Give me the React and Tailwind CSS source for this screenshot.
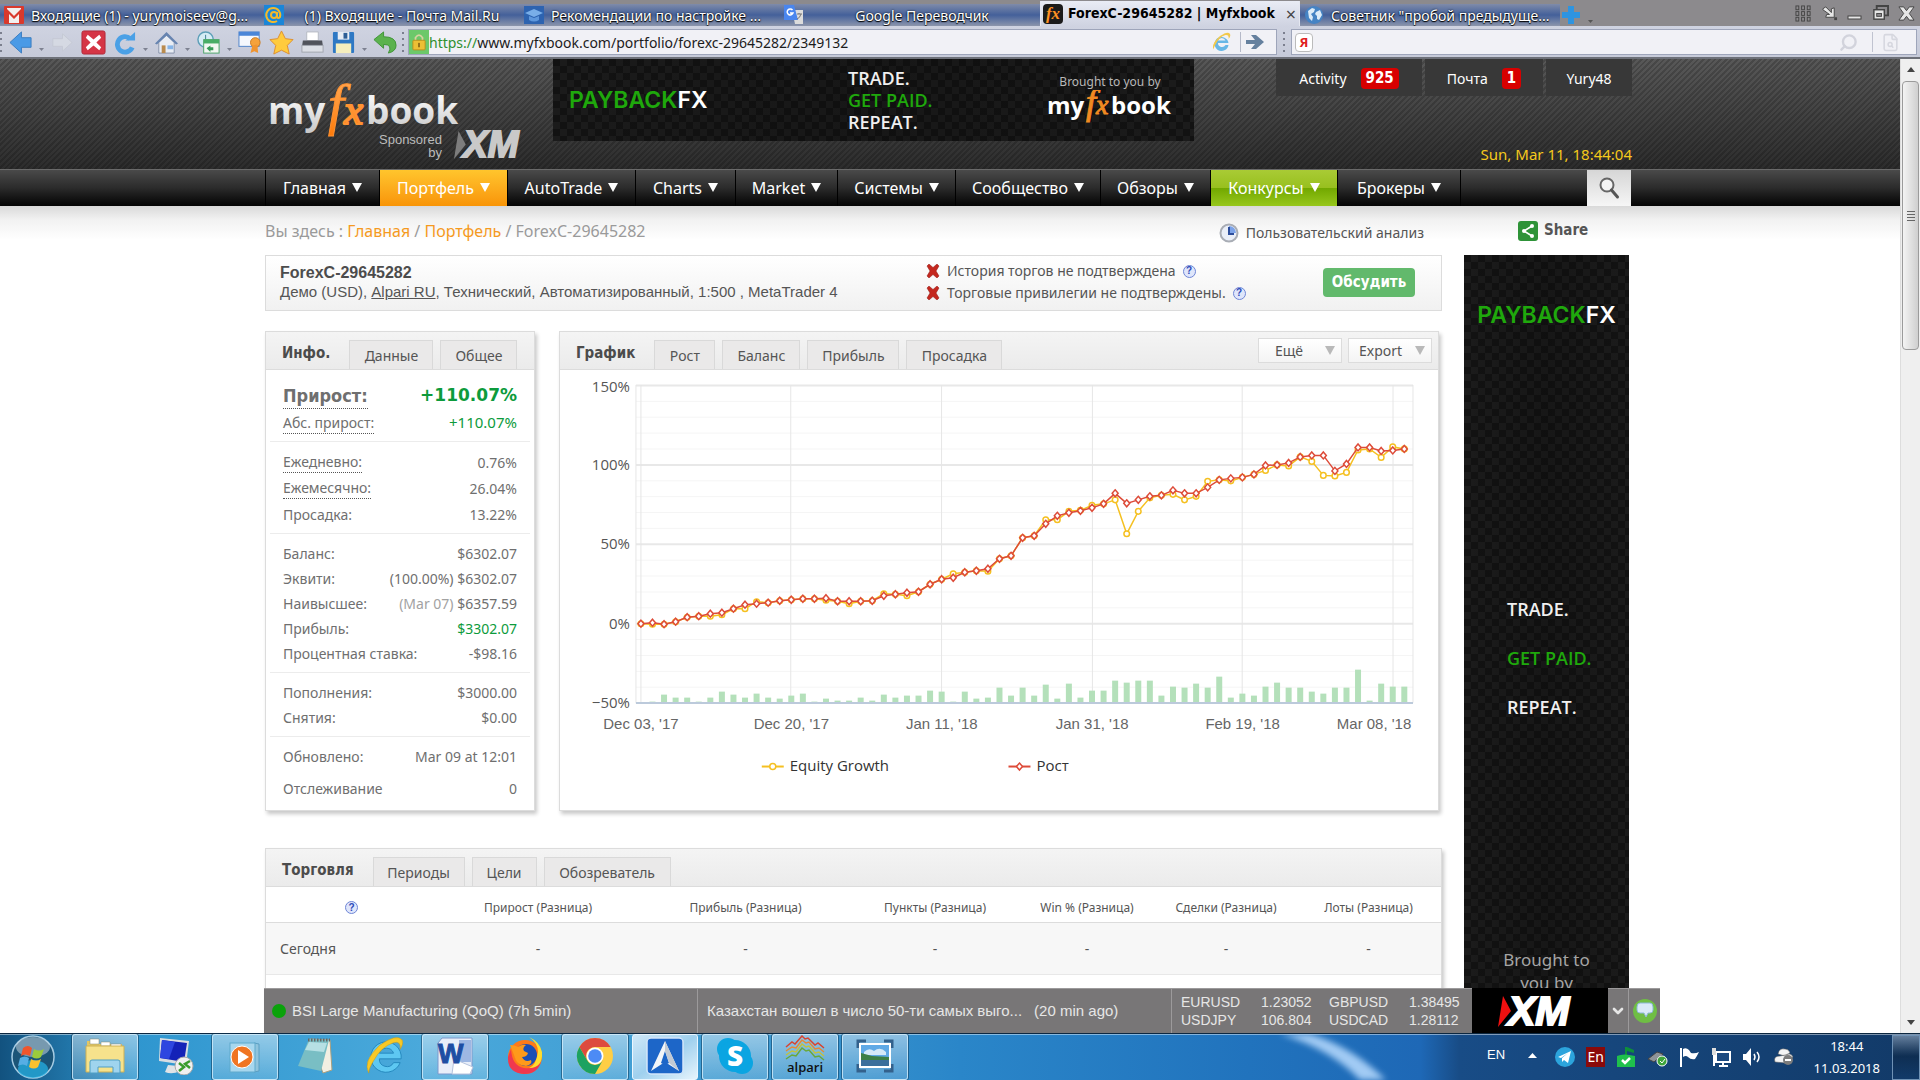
import React from "react";
import { Search, FileSearch, ChevronDown } from "lucide-react";

const carbon =
  "bg-[linear-gradient(90deg,rgba(0,0,0,0)_0%,rgba(0,0,0,0.15)_50%,rgba(0,0,0,0)_100%),conic-gradient(#1b1b1b_25%,#121212_0_50%,#1b1b1b_0_75%,#121212_0)] bg-[length:100%_100%,14px_14px]";

/* ---------- shared pieces ---------- */

function Down({ size = "h-[9px] w-[10px]", className = "" }) {
  return (
    <svg viewBox="0 0 10 9" preserveAspectRatio="none" className={"shrink-0 " + size + " " + className} aria-hidden="true">
      <path d="M0 0h10L5 9z" fill="currentColor" />
    </svg>
  );
}

function Wordmark({ large = false }) {
  return large ? (
    <svg viewBox="0 0 196 58" className="h-[58px] w-[196px]" role="img" aria-label="myfxbook">
      <defs>
        <linearGradient id="flame" x1="0" y1="0" x2="0" y2="1"><stop offset="0" stopColor="#ffb060" /><stop offset="1" stopColor="#ff7a08" /></linearGradient>
        <linearGradient id="steel" x1="0" y1="0" x2="0" y2="1"><stop offset="0.3" stopColor="#f4f4f4" /><stop offset="1" stopColor="#c4c4c4" /></linearGradient>
      </defs>
      <g fontFamily="Open Sans" fontWeight="bold" fontSize="37" fill="url(#steel)"><text x="0" y="43">my</text><text x="98" y="43">book</text></g>
      <g fontFamily="Liberation Serif" fontStyle="italic" fill="url(#flame)" stroke="#ff9232"><text x="60" y="43" fontSize="58">f</text><text x="76" y="43" fontSize="43" strokeWidth="2">x</text></g>
    </svg>
  ) : (
    <svg viewBox="0 0 126 36" className="h-9 w-[126px]" role="img" aria-label="myfxbook">
      <g fontFamily="Open Sans" fontWeight="bold" fontSize="24" fill="#fff"><text x="0" y="24">my</text><text x="64" y="24">book</text></g>
      <g fontFamily="Liberation Serif" fontStyle="italic" fill="#f08a22" stroke="#f08a22"><text x="39" y="24" fontSize="36">f</text><text x="49" y="24" fontSize="28">x</text></g>
    </svg>
  );
}

function XM({ arrow, letters, className }) {
  return (
    <svg viewBox="0 0 84 34" className={"overflow-visible " + className} role="img" aria-label="XM">
      <path d="M5 2l8 15L0 33z" fill={arrow} />
      <text x="10" y="31" fontFamily="Liberation Sans" fontWeight="900" fontStyle="italic" fontSize="41" fill={letters} stroke={letters} strokeWidth="2">XM</text>
    </svg>
  );
}

function Help() {
  return (
    <button aria-label="Справка" className="flex size-[13px] items-center justify-center rounded-full border border-[#6f86d6] bg-[#dfe6fb] font-['Liberation_Sans'] text-[10px] leading-none font-bold text-[#2c49b8]">
      ?
    </button>
  );
}

/* ---------- browser chrome ---------- */

const tabBase =
  "flex h-[22px] w-[260px] items-center bg-gradient-to-b from-[#7f8ba9] via-[#44609a] to-[#8c95ab] pl-1 text-[14px] text-white [text-shadow:0_0_2px_#000,0_1px_1px_#000]";

function GmailIcon() {
  return (
    <svg viewBox="0 0 20 18" className="h-[18px] w-5 shrink-0"><rect width="20" height="18" rx="1" fill="#d9392c" /><path d="M3 2h14v15H3z" fill="#f3f0ef" /><path d="M2 2l8 8 8-8v15h-3V8l-5 5-5-5v9H2z" fill="#d9392c" /></svg>
  );
}
function MailRuIcon() {
  return (
    <svg viewBox="0 0 20 20" className="size-5 shrink-0"><rect width="20" height="20" fill="#1a86d8" /><g fill="none" stroke="#f2b92c" strokeWidth="2"><circle cx="10" cy="10" r="3" /><path d="M13 7v5q1 2 3 0a7 7 0 1 0-3 4" /></g></svg>
  );
}
function CapIcon() {
  return (
    <svg viewBox="0 0 20 18" className="h-[18px] w-5 shrink-0"><rect width="20" height="18" fill="#2d63b0" /><path d="M1 7l9-4 9 4-9 4z" fill="#79aee8" /><path d="M5 10v4q5 3 10 0v-4l-5 2z" fill="#5e97dc" /></svg>
  );
}
function TranslateIcon() {
  return (
    <svg viewBox="0 0 20 20" className="size-5 shrink-0"><path d="M8 5h11v14h-8z" fill="#dcdcdc" /><path d="M0 0h10l4 15H0z" fill="#4a86ee" /><path d="M8.500 5A3 3 0 1 0 9 8H6" fill="none" stroke="#fff" strokeWidth="1.500" /><path d="M13 9h5M15 8v1M17 9q-1 4-4 5" stroke="#777" fill="none" /></svg>
  );
}
function FxIcon() {
  return (
    <span className="flex size-5 shrink-0 items-center justify-center rounded-sm bg-[#1b1b1b] font-['Liberation_Serif'] text-[17px] leading-none font-bold text-[#ff9122] italic [text-shadow:none]">fx</span>
  );
}
function GlobeIcon() {
  return (
    <svg viewBox="0 0 20 20" className="size-5 shrink-0"><circle cx="10" cy="10" r="9" fill="#4583c4" /><path d="M4 6l4-3 3 1-1 3-3 2 2 3-1 4-3-3zM12 7l4-2 2 5-3 5-2-1 0-3-2-2z" fill="#dcebf8" /></svg>
  );
}

function TabBar() {
  const tabs = [
    [<GmailIcon />, "Входящие (1) - yurymoiseev@g...", "text-left"],
    [<MailRuIcon />, "(1) Входящие - Почта Mail.Ru", "text-center"],
    [<CapIcon />, "Рекомендации по настройке ...", "text-left"],
    [<TranslateIcon />, "Google Переводчик", "text-center"],
  ];
  return (
    <div className="flex h-[26px] items-end bg-[#8c8a8d]">
      <div role="tablist" className="flex items-end">
        {tabs.map(([icon, name, align]) => (
          <button key={name} role="tab" className={tabBase}>
            {icon}
            <span className={"min-w-0 flex-1 truncate px-[7px] " + align}>{name}</span>
          </button>
        ))}
        <div className="flex h-[25px] w-[260px] items-center gap-[5px] border-x border-[#e4e7f0] bg-gradient-to-b from-[#e9ecf5] to-[#cfd3e1] pl-[2px]">
          <FxIcon />
          <button role="tab" aria-selected="true" className="flex-1 truncate text-left font-['DejaVu_Sans_Condensed'] text-[14px] font-bold text-black">ForexC-29645282 | Myfxbook</button>
          <button aria-label="Закрыть вкладку" className="w-4 text-[18px] leading-none text-[#444]">×</button>
        </div>
        <button role="tab" className={tabBase}>
          <GlobeIcon />
          <span className="min-w-0 flex-1 truncate px-[7px] text-left">Советник "пробой предыдуще...</span>
        </button>
      </div>
      <button aria-label="Новая вкладка" className="ml-[2px] flex h-[22px] items-center gap-2">
        <svg viewBox="0 0 18 18" className="size-[18px]"><path d="M6 0h6v6h6v6h-6v6H6v-6H0V6h6z" fill="#2e94e0" /></svg>
        <Down size="h-[3px] w-[5px]" className="mt-3 text-[#555]" />
      </button>
      <div className="ml-auto flex h-[26px] items-center gap-[9px] pr-[5px] text-[#3d3d3d]">
        <button aria-label="Вкладки"><svg viewBox="0 0 18 18" className="size-[17px]">{[1, 7, 13].map((x) => [1, 7, 13].map((y) => <rect key={x + "-" + y} x={x} y={y} width="3" height="4" fill="none" stroke="#444" />))}</svg></button>
        <button aria-label="В трей"><svg viewBox="0 0 18 18" className="size-[17px]"><path d="M2 4l3-2 6 6V4l3-1v10H5l1-3h3L2 5z" fill="#e6e6e6" stroke="#444" /><rect x="14" y="13" width="3" height="3" fill="#444" /></svg></button>
        <button aria-label="Свернуть"><svg viewBox="0 0 16 16" className="size-4"><rect x="1" y="11" width="13" height="3" fill="#e6e6e6" stroke="#444" /></svg></button>
        <button aria-label="Восстановить"><svg viewBox="0 0 18 18" className="size-[17px]"><path d="M5 5V1h12v10h-4" fill="none" stroke="#444" strokeWidth="2" /><rect x="2" y="5" width="11" height="10" fill="#e6e6e6" stroke="#444" strokeWidth="1.500" /><rect x="5" y="9" width="5" height="3" fill="#8c8a8d" stroke="#444" /></svg></button>
        <button aria-label="Закрыть"><svg viewBox="0 0 18 18" className="size-[17px]"><path d="M1 2h5l3 4 3-4h5l-5 7 5 7h-5l-3-4-3 4H1l5-7z" fill="#e6e6e6" stroke="#444" /></svg></button>
      </div>
    </div>
  );
}

function Grip() {
  return <span className="h-5 w-[2px] shrink-0 bg-[repeating-linear-gradient(180deg,#7b7f8e_0_2px,transparent_2px_6px)]" />;
}

function Tool({ label, drop, children }) {
  return (
    <button aria-label={label} className="flex items-end">
      <svg viewBox="-1 -1 26 26" className="size-[25px]">{children}</svg>
      {drop && <Down size="h-[3px] w-[5px]" className="mb-1 ml-[6px] text-[#7d8191]" />}
    </button>
  );
}

function Toolbar() {
  return (
    <div className="flex h-[33px] items-center border-b-2 border-[#6d7078] bg-gradient-to-b from-[#cfd3e1] to-[#c6cad9] pt-px">
      <Grip />
      <div className="flex shrink-0 items-center gap-[6px] pr-[4px] pl-[6px]">
        <Tool label="Назад" drop><path d="M1 12L13 1v6h10v10H13v6z" fill="#4a9ae6" stroke="#3a7cc0" /></Tool>
        <Tool label="Вперёд"><path d="M22 12L12 3v5H2v8h10v5z" fill="#d5d9e3" stroke="#c5c9d4" /></Tool>
        <Tool label="Стоп"><rect x="0" y="0" width="24" height="24" rx="2" fill="#d53546" stroke="#b12838" /><path d="M6 4l6 5 6-5 2 3-5 5 5 5-2 3-6-5-6 5-2-3 5-5-5-5z" fill="#fff" /></Tool>
        <Tool label="Обновить" drop><path d="M18 8A8 8 0 1 0 20 17" fill="none" stroke="#4aa0e6" strokeWidth="5" /><path d="M13 10h10V1z" fill="#4aa0e6" /></Tool>
        <Tool label="Домой" drop><path d="M4 12v11h16V12l-8-8z" fill="#e9edf4" stroke="#8793ab" /><path d="M0 13L12 1l12 12-2 1L12 5 2 14z" fill="#6784b0" /><rect x="7" y="15" width="4" height="8" fill="#b98b4e" /><rect x="13" y="15" width="6" height="4" fill="#86b5e8" /></Tool>
        <Tool label="Журнал" drop><circle cx="9" cy="9" r="8" fill="#d5ecf5" stroke="#5e9fb8" strokeWidth="1.500" /><path d="M9 4v5l4 3" stroke="#3d7d94" fill="none" /><rect x="7" y="9" width="16" height="14" fill="#f2f7f2" stroke="#4ba368" /><rect x="7" y="9" width="16" height="4" fill="#48ad66" /><path d="M10 18l4-3v2h3v3h-3v2z" fill="#369c57" /></Tool>
        <Tool label="Сертификат"><rect x="0" y="1" width="21" height="15" fill="#f5f8fd" stroke="#4f83c9" /><rect x="0" y="1" width="21" height="4" fill="#4a86d8" /><circle cx="17" cy="12" r="5" fill="#f5a23c" stroke="#c97a20" /><path d="M14 15l-2 8 4-2 4 2-1-9z" fill="#ef9430" /></Tool>
        <Tool label="Избранное"><path d="M12 0l4 8 8 1-6 6 2 9-8-4-8 4 2-9-6-6 8-1z" fill="#ffcb3d" stroke="#dd8f30" /></Tool>
        <Tool label="Печать"><path d="M6 1h12v9H6z" fill="#fff" stroke="#b5b9c2" /><path d="M2 10h20l1 7H1z" fill="#50535b" /><rect x="1" y="15" width="22" height="7" fill="#dcdfe6" stroke="#a0a4ae" /></Tool>
        <Tool label="Сохранить" drop><rect x="1" y="1" width="22" height="22" rx="1" fill="#2e78c4" /><rect x="6" y="1" width="12" height="8" fill="#e8edf4" /><rect x="12" y="2" width="4" height="6" fill="#2e5f96" /><rect x="4" y="13" width="16" height="10" fill="#f5eebd" /></Tool>
        <Tool label="Отменить"><path d="M0 9l10-8v5q13 0 13 9 0 6-8 8 5-9-5-9v4z" fill="#5bb24e" stroke="#3f9437" /></Tool>
      </div>
      <Grip />
      <div className="ml-1 flex h-[26px] flex-1 items-center border border-[#9ea5ba] bg-[#f1f1f6]">
        <span className="flex h-full w-[20px] shrink-0 items-center justify-center bg-[#6cc86a]">
          <svg viewBox="0 0 16 20" className="h-[18px] w-[14px]"><path d="M4 9V5q4-6 8 0v4" fill="none" stroke="#d8d2a0" strokeWidth="2" /><rect x="1" y="8" width="14" height="11" rx="1" fill="#edbf35" stroke="#b88b18" /><rect x="7" y="11" width="2" height="5" fill="#8c6914" /></svg>
        </span>
        <span aria-label="Адрес" className="flex-1 truncate text-[14px] text-[#1c1c1c]"><span className="text-[#2f8f2f]">https://</span>www.myfxbook.com/portfolio/forexc-29645282/2349132</span>
        <svg viewBox="0 0 40 40" className="size-5"><path d="M33 22H12a8 8 0 0 0 15 4h6a14 14 0 1 1 0-4zM12 17h15a8 8 0 0 0-15 0z" fill="#68b7e6" /><path d="M3 35Q-2 24 16 8 32-3 36 4q2 5-3 10 2-9-6-8Q14 10 7 25q-4 8-4 10z" fill="#f2c94c" /></svg>
        <span className="ml-2 h-5 w-px bg-[#b5b9c8]" />
        <button aria-label="Перейти" className="mr-[11px] ml-1"><svg viewBox="0 0 20 20" className="size-5"><path d="M1 8h9L6 3h5l8 7-8 7H6l4-5H1z" fill="#65809e" /></svg></button>
      </div>
      <span className="mx-[6px] flex"><Grip /></span>
      <label className="mr-[3px] flex h-[26px] w-[626px] items-center border border-[#9ea5ba] bg-[#f1f1f6] pl-[3px]">
        <span className="flex h-[19px] w-[18px] shrink-0 items-center justify-center rounded-sm border border-[#bbb] bg-white text-[13px] leading-none font-bold text-[#e02020]">Я</span>
        <input aria-label="Поиск в Яндексе" className="min-w-0 flex-1 bg-transparent px-2 text-[14px] outline-none" />
        <Search className="size-[19px] -scale-x-100 rotate-0 text-[#d2d3dc]" strokeWidth={3} />
        <span className="mr-[8px] ml-[14px] h-5 w-px bg-[#c0c3d0]" />
        <FileSearch className="mr-4 size-[19px] text-[#d6d7df]" />
      </label>
    </div>
  );
}

/* ---------- site header ---------- */

const menu = [
  ["Главная", "w-[114px] bg-gradient-to-b from-[#4a4a4a] via-[#2b2b2b] to-[#050505]"],
  ["Портфель", "w-[128px] bg-gradient-to-b from-[#ffc52c] to-[#f89406]"],
  ["AutoTrade", "w-[128px] bg-gradient-to-b from-[#4a4a4a] via-[#2b2b2b] to-[#050505]"],
  ["Charts", "w-[100px] bg-gradient-to-b from-[#4a4a4a] via-[#2b2b2b] to-[#050505]"],
  ["Market", "w-[102px] bg-gradient-to-b from-[#4a4a4a] via-[#2b2b2b] to-[#050505]"],
  ["Системы", "w-[118px] bg-gradient-to-b from-[#4a4a4a] via-[#2b2b2b] to-[#050505]"],
  ["Сообщество", "w-[145px] bg-gradient-to-b from-[#4a4a4a] via-[#2b2b2b] to-[#050505]"],
  ["Обзоры", "w-[110px] bg-gradient-to-b from-[#4a4a4a] via-[#2b2b2b] to-[#050505]"],
  ["Конкурсы", "w-[127px] bg-[linear-gradient(180deg,#a9cb35_0%,#98c01f_49%,#72a800_51%,#97c71c_100%)]"],
  ["Брокеры", "w-[123px] bg-gradient-to-b from-[#4a4a4a] via-[#2b2b2b] to-[#050505]"],
];

function Header() {
  const badge = "rounded-sm bg-[#d80000] px-[5px] font-['DejaVu_Sans_Condensed'] text-[15px] leading-[21px]";
  return (
    <header>
      <div className="bg-[repeating-linear-gradient(135deg,rgba(0,0,0,0.18)_0_2px,transparent_2px_4px),linear-gradient(180deg,#585858,#2c2c2c)]">
        <div className="mx-auto flex h-[110px] w-full max-w-[1370px]">
          <a href="#" aria-label="Myfxbook" className="flex w-[288px] shrink-0 flex-col pt-[22px] pl-[3px]">
            <Wordmark large />
            <span className="-mt-[10px] ml-[111px] flex gap-3 font-['Liberation_Sans'] text-[13px] leading-[13px] text-[#bcbcbc]">
              <span className="pt-[4px] text-right">Sponsored<br />by</span>
              <XM arrow="#7d7d7d" letters="#c9c9c9" className="h-[31px] w-[76px]" />
            </span>
          </a>
          <a href="#" className={"flex h-[82px] w-[641px] shrink-0 items-center justify-between pr-[21px] pl-4 " + carbon}>
            <span className="w-[260px] font-['Inter'] text-[23px] font-semibold text-white"><span className="text-[#1fa80c]">PAYBACK</span>FX</span>
            <span className="flex-1 pl-[19px] font-['Open_Sans'] text-[18px] leading-[22px] font-semibold text-[#f0f0f0]">TRADE.<br /><span className="text-[#1fa80c]">GET PAID.</span><br />REPEAT.</span>
            <span className="flex flex-col items-center text-[12px] leading-4 text-[#b8b8b8]"><span>Brought to you by</span><Wordmark /></span>
          </a>
          <div className="ml-auto flex flex-col items-end justify-between pr-[3px]">
            <nav aria-label="Аккаунт" className="flex h-[37px] gap-[3px] text-[14px] text-white">
              <a href="#" className="flex w-[146px] items-center justify-center gap-[14px] bg-[#383838] pt-px">Activity <b className={badge}>925</b></a>
              <a href="#" className="flex w-[118px] items-center justify-center gap-[14px] bg-[#383838] pt-px">Почта <b className={badge}>1</b></a>
              <a href="#" className="flex w-[86px] items-center justify-center bg-[#383838] pt-px">Yury48</a>
            </nav>
            <time className="pb-1 text-[15px] leading-[22px] text-[#f5c91c]">Sun, Mar 11, 18:44:04</time>
          </div>
        </div>
      </div>
      <div className="border-t border-[#6a6a6a] bg-gradient-to-b from-[#4a4a4a] via-[#2b2b2b] to-[#050505]">
        <nav aria-label="Меню" className="mx-auto flex h-9 w-full max-w-[1370px] border-l border-black">
          {menu.map(([name, cls]) => (
            <a key={name} href="#" className={"flex items-center justify-center gap-[6px] border-r border-black pb-px text-[16px] text-white " + cls}>
              {name}<Down />
            </a>
          ))}
          <button aria-label="Поиск" className="mr-1 ml-auto flex w-11 items-center justify-center bg-gradient-to-b from-[#d6d6d6] to-[#f6f6f6]">
            <svg viewBox="0 0 24 24" className="size-[24px]"><circle cx="10" cy="9" r="6.500" fill="#f4f4f4" stroke="#666" strokeWidth="2" /><path d="M14.500 14l6 7" stroke="#555" strokeWidth="3" strokeLinecap="round" /></svg>
          </button>
        </nav>
      </div>
    </header>
  );
}

/* ---------- panels ---------- */

function PanelTabs({ title, tabs, children }) {
  return (
    <div className="flex h-[38px] items-end border-b border-[#dcdcdc] bg-gradient-to-b from-[#f4f4f4] to-[#ebebeb]">
      <h2 className="px-4 pr-[19px] pb-[4px] font-['DejaVu_Sans_Condensed'] text-[15px] leading-[24px] font-bold text-[#4c4c4c]">{title}</h2>
      {tabs.map(([name, w]) => (
        <button key={name} className={"mr-[7px] flex h-[29px] shrink-0 items-center justify-center border border-b-0 border-[#d9d9d9] bg-[#eae9e9] text-[14px] text-[#555] " + w}>{name}</button>
      ))}
      {children}
    </div>
  );
}

function Row({ label, value, dotted, cls = "h-[25px]", valueCls = "text-[#6f6f6f]" }) {
  return (
    <div className={"flex items-center justify-between px-[9px] " + cls}>
      <dt className={dotted ? "border-b border-dotted border-[#555]" : ""}>{label}</dt>
      <dd className={valueCls}>{value}</dd>
    </div>
  );
}

function InfoPanel() {
  const group = "mx-1 border-b border-[#ececec] px-[4px] pt-[7px] pb-[6px]";
  return (
    <section className="w-[270px] shrink-0 border border-[#dcdcdc] bg-white shadow-[2px_3px_4px_rgba(0,0,0,0.22)]">
      <PanelTabs title="Инфо." tabs={[["Данные", "w-[84px]"], ["Общее", "w-[77px]"]]} />
      <dl className="text-[14px] text-[#6f6f6f]">
        <div className="mx-1 border-b border-[#ececec] px-[4px] pt-[12px] pb-[5px]">
          <Row label="Прирост:" value="+110.07%" dotted cls="h-[27px] font-bold text-[18px] leading-[25px] font-['DejaVu_Sans_Condensed']" valueCls="font-['DejaVu_Sans'] text-[17px] text-[#0d9b3c]" />
          <Row label="Абс. прирост:" value="+110.07%" dotted cls="h-[27px]" valueCls="text-[#0d9b3c] text-[15px]" />
        </div>
        <div className={group}>
          <Row label="Ежедневно:" value="0.76%" dotted cls="h-[26px]" />
          <Row label="Ежемесячно:" value="26.04%" dotted cls="h-[26px]" />
          <Row label="Просадка:" value="13.22%" cls="h-[26px]" />
        </div>
        <div className={group}>
          <Row label="Баланс:" value="$6302.07" />
          <Row label="Эквити:" value="(100.00%) $6302.07" />
          <Row label="Наивысшее:" value={<><span className="text-[#a2a2a2]">(Mar 07)</span> $6357.59</>} />
          <Row label="Прибыль:" value="$3302.07" valueCls="text-[#0d9b3c]" />
          <Row label="Процентная ставка:" value="-$98.16" />
        </div>
        <div className={group}>
          <Row label="Пополнения:" value="$3000.00" />
          <Row label="Снятия:" value="$0.00" />
        </div>
        <div className="px-2 pt-[7px] pb-2">
          <Row label="Обновлено:" value="Mar 09 at 12:01" />
          <Row label="Отслеживание" value="0" cls="mt-[7px] h-[25px]" />
        </div>
      </dl>
    </section>
  );
}

/* Vertical positions inside the chart drawing, one per trading day. */
const growth = [624, 623, 624.5, 622, 617.5, 616.5, 614, 613, 609, 605, 604, 603, 601, 600, 599, 599, 598.5, 601.5, 601.5, 601.5, 601, 596, 594.5, 593, 592, 584.5, 579.5, 578, 572.5, 571, 569, 559, 556, 538, 536, 524, 516, 513, 511, 508, 504, 493.5, 503.5, 500, 496.5, 495.5, 490.5, 493.5, 493.5, 487.5, 480, 478.5, 477.5, 474.5, 465.5, 465, 463, 457, 455.5, 455.5, 471, 464, 447.5, 447.5, 451, 450.5, 449];
const equityDiff = { 1: 624.5, 6: 616.5, 7: 615, 9: 609, 10: 602, 16: 600.5, 18: 604, 21: 594, 23: 596, 27: 574, 30: 571.5, 35: 520, 36: 520, 37: 511.5, 38: 510.5, 39: 505.5, 41: 500, 42: 534, 43: 511.5, 44: 498, 46: 494.5, 47: 500, 48: 496.5, 49: 481.5, 51: 481, 54: 470.5, 56: 466, 58: 461.5, 59: 475.5, 60: 476, 61: 472.5, 62: 450, 63: 449, 64: 457.5, 65: 447 };
const equity = growth.map((v, i) => equityDiff[i] ?? v);
const volume = [0, 1, 8, 5, 5, 1, 5, 11, 8, 5, 9, 5, 4, 7, 9, 1, 4, 2, 2, 5, 2, 8, 5, 7, 7, 12, 11, 1, 11, 4, 5, 15, 7, 15, 7, 18, 4, 19, 5, 12, 12, 22, 20, 22, 22, 7, 16, 15, 19, 15, 26, 5, 9, 7, 16, 20, 15, 15, 11, 9, 15, 15, 33, 2, 19, 16, 16];
const px = (i) => 81 + i * 11.58;
const py = (v) => v - 370;

function Chart() {
  const line = (a) => a.map((v, i) => px(i) + "," + py(v)).join(" ");
  return (
    <svg viewBox="0 0 879 441" className="block w-full" role="img" aria-label="График роста счёта">
      {Array.from({ length: 20 }, (_, i) => <path key={i} d={`M76 ${15.5 + i * 15.9}H854`} stroke={i % 5 ? "#f5f5f5" : "#e8e8e8"} strokeWidth={i % 5 ? 1 : 2} />)}
      {[81, 231, 382, 533, 683, 834, 854, 76].map((x) => <path key={x} d={`M${x} 15V333`} stroke="#e6e6e6" />)}
      {volume.map((h, i) => <rect key={i} x={px(i) - 3} y={333 - h} width="6" height={h} fill="#b4e0ba" />)}
      <path d="M76 333.500H854" stroke="#bccadb" strokeWidth="2" />
      <polyline points={line(equity)} fill="none" stroke="#f5c021" strokeWidth="1.500" />
      {equity.map((v, i) => <circle key={i} cx={px(i)} cy={py(v)} r="2.800" fill="#fff" stroke="#f5c021" strokeWidth="1.500" />)}
      <polyline points={line(growth)} fill="none" stroke="#dd4b39" strokeWidth="1.500" />
      {growth.map((v, i) => <path key={i} d={`M${px(i)} ${py(v) - 3.5}l3 3.5-3 3.500-3-3.500z`} fill="#fff" stroke="#dd4b39" strokeWidth="1.500" />)}
      <g fontFamily="Open Sans" fontSize="15" fill="#555" textAnchor="end">
        <text x="70" y="22">150%</text><text x="70" y="100">100%</text><text x="70" y="179">50%</text><text x="70" y="259">0%</text><text x="70" y="338">−50%</text>
      </g>
      <g fontFamily="Liberation Sans" fontSize="15" fill="#666" textAnchor="middle">
        {["Dec 03, '17", "Dec 20, '17", "Jan 11, '18", "Jan 31, '18", "Feb 19, '18"].map((t, i) => <text key={t} x={81 + i * 150.600} y="359">{t}</text>)}
        <text x="815" y="359">Mar 08, '18</text>
      </g>
      <g fontFamily="Open Sans" fontSize="15" fill="#333">
        <path d="M202 397h22" stroke="#f5c021" strokeWidth="2" /><circle cx="213" cy="397" r="3" fill="#fff" stroke="#f5c021" strokeWidth="1.500" /><text x="230" y="401">Equity Growth</text>
        <path d="M449 397h22" stroke="#dd4b39" strokeWidth="2" /><path d="M460 393.500l3 3.500-3 3.500-3-3.500z" fill="#fff" stroke="#dd4b39" strokeWidth="1.500" /><text x="477" y="401">Рост</text>
      </g>
    </svg>
  );
}

function ChartPanel() {
  const drop = "mb-[6px] flex h-[25px] items-center justify-between border border-[#dcdcdc] bg-gradient-to-b from-white to-[#f4f4f4] text-[14px] text-[#555]";
  return (
    <section className="min-w-0 flex-1 border border-[#dcdcdc] bg-white shadow-[2px_3px_4px_rgba(0,0,0,0.22)]">
      <PanelTabs title="График" tabs={[["Рост", "w-[61px]"], ["Баланс", "w-[78px]"], ["Прибыль", "w-[92px]"], ["Просадка", "w-[96px]"]]}>
        <button className={drop + " ml-auto w-[84px] pr-[6px] pl-4"}>Ещё<Down className="text-[#b9b9b9]" /></button>
        <button className={drop + " mr-[6px] ml-[6px] w-[84px] pr-[6px] pl-[10px]"}>Export<Down className="text-[#b9b9b9]" /></button>
      </PanelTabs>
      <Chart />
    </section>
  );
}

function Cross() {
  return <svg viewBox="0 0 14 14" className="h-[14px] w-[14px] shrink-0"><path d="M3 0l4 3.500L11 0l2 2-3 5 3 5-2 2-4-3.500L3 14l-2-2 3-5-3-5z" fill="#c4281f" stroke="#8f1712" strokeWidth="0.500" /></svg>;
}

function Main() {
  const heads = ["Прирост", "Прибыль", "Пункты", "Win %", "Сделки", "Лоты"];
  return (
    <main className="min-w-0 flex-1">
      <div className="flex h-[49px] items-center">
        <nav aria-label="Путь" className="text-[16px] text-[#9a9a9a]">Вы здесь : <a href="#" className="text-[#f59a1f]">Главная</a> / <a href="#" className="text-[#f59a1f]">Портфель</a> / ForexC-29645282</nav>
        <a href="#" className="mr-[18px] ml-auto flex items-center gap-[7px] pt-1 text-[14px] text-[#555]">
          <svg viewBox="0 0 20 20" className="size-5"><circle cx="10" cy="10" r="8.500" fill="#e9eef8" stroke="#a9adb5" strokeWidth="2" /><path d="M10 3a7 7 0 0 1 7 7h-7z" fill="#7ba2e8" /><path d="M10 4v7h5" stroke="#2c4d9c" strokeWidth="2" fill="none" /></svg>
          Пользовательский анализ
        </a>
      </div>
      <section className="flex h-[56px] items-center border border-[#dcdcdc] bg-gradient-to-b from-white to-[#f1f1f1] pb-[2px] pl-[14px] font-['Liberation_Sans'] text-[15px] leading-[19px] text-[#555]">
        <div className="w-[646px] shrink-0 whitespace-nowrap">
          <h1 className="text-[16px] font-bold text-[#4c4c4c]">ForexC-29645282</h1>
          <p>Демо (USD), <a href="#" className="underline">Alpari RU</a>, Технический, Автоматизированный, 1:500 , MetaTrader 4</p>
        </div>
        <ul className="font-['Noto_Sans'] text-[14px] leading-[22px]">
          <li className="flex items-center gap-[7px]"><Cross />История торгов не подтверждена<Help /></li>
          <li className="flex items-center gap-[7px]"><Cross />Торговые привилегии не подтверждены.<Help /></li>
        </ul>
        <button className="mr-[26px] ml-auto h-[29px] w-[92px] rounded bg-[#62b96c] font-['DejaVu_Sans_Condensed'] text-[15px] font-bold text-white">Обсудить</button>
      </section>
      <div className="mt-5 mr-[3px] flex gap-6">
        <InfoPanel />
        <ChartPanel />
      </div>
      <section className="mt-[37px] border border-[#dcdcdc] bg-white shadow-[2px_3px_4px_rgba(0,0,0,0.22)]">
        <PanelTabs title="Торговля" tabs={[["Периоды", "w-[92px]"], ["Цели", "w-[65px]"], ["Обозреватель", "w-[127px]"]]} />
        <table className="w-full table-fixed text-[14px] text-[#555]">
          <colgroup><col className="w-[171px]" /><col className="w-[202px]" /><col className="w-[213px]" /><col className="w-[166px]" /><col className="w-[138px]" /><col className="w-[140px]" /><col /></colgroup>
          <thead>
            <tr className="h-[35px] border-b border-[#dcdcdc] text-[12px]">
              <th><span className="flex justify-center pt-[6px]"><Help /></span></th>
              {heads.map((h) => <th key={h} className="pt-[6px] font-normal">{h} (Разница)</th>)}
            </tr>
          </thead>
          <tbody>
            <tr className="h-[52px] border-b border-[#e8e8e8] bg-[#f7f7f7]">
              <th className="pl-[14px] text-left font-normal">Сегодня</th>
              {heads.map((h) => <td key={h} className="text-center">-</td>)}
            </tr>
            <tr className="h-[53px]"><td colSpan={7} /></tr>
          </tbody>
        </table>
      </section>
    </main>
  );
}

function Sidebar() {
  return (
    <aside className="w-[165px] shrink-0">
      <button className="flex h-[49px] items-center gap-[6px] pl-[54px] font-['DejaVu_Sans_Condensed'] text-[15px] font-bold text-[#555]">
        <svg viewBox="0 0 20 20" className="size-5"><rect width="20" height="20" rx="3" fill="#2e9338" /><path d="M14 5L6 10l8 5" fill="none" stroke="#fff" strokeWidth="1.500" /><g fill="#fff"><circle cx="14" cy="5" r="2" /><circle cx="6" cy="10" r="2" /><circle cx="14" cy="15" r="2" /></g></svg>
        Share
      </button>
      <a href="#" className={"flex h-[820px] flex-col text-white " + carbon}>
        <span className="pt-[44px] text-center font-['Inter'] text-[23px] leading-8 font-semibold"><span className="text-[#1fa80c]">PAYBACK</span>FX</span>
        <span className="mt-[254px] pl-[43px] font-['Open_Sans'] text-[18px] leading-[49px] font-semibold text-[#f0f0f0]">TRADE.<br /><span className="text-[#1fa80c]">GET PAID.</span><br />REPEAT.</span>
        <span className="mt-[216px] px-8 text-center text-[17px] leading-[23px] text-[#a5a5a5]">Brought to you by</span>
      </a>
    </aside>
  );
}

function Ticker() {
  return (
    <footer className="absolute inset-x-0 bottom-0">
      <div className="mx-auto flex h-[45px] w-full max-w-[1372px] font-['Liberation_Sans'] text-[15px] whitespace-nowrap text-[#e6e6e6]">
        <div className="flex w-[1396px] shrink-0">
          <a href="#" className="flex w-[434px] items-center gap-[6px] border-t border-r border-[#9c9a9b] bg-[#787677] pl-2"><span className="size-[14px] rounded-full bg-[#0aa20a]" />BSI Large Manufacturing (QoQ) (7h 5min)</a>
          <a href="#" className="flex w-[474px] items-center gap-[12px] border-t border-r border-[#9c9a9b] bg-[#787677] pl-[9px]"><span>Казахстан вошел в число 50-ти самых выго...</span><span>(20 min ago)</span></a>
          <dl className="grid w-[300px] grid-cols-[80px_68px_80px_1fr] content-center border-t border-[#9c9a9b] bg-[#787677] pl-[9px] text-[14px] leading-[18px]">
            <dt>EURUSD</dt><dd>1.23052</dd><dt>GBPUSD</dt><dd>1.38495</dd><dt>USDJPY</dt><dd>106.804</dd><dt>USDCAD</dt><dd>1.28112</dd>
          </dl>
          <a href="#" aria-label="XM" className="flex w-[136px] items-center justify-center bg-black"><XM arrow="#f01010" letters="#ffffff" className="h-[34px] w-[84px]" /></a>
          <button aria-label="Свернуть ленту" className="flex w-[20px] items-center justify-center border-t border-[#9c9a9b] bg-[#787677]"><ChevronDown className="size-[16px]" strokeWidth={4} /></button>
          <button aria-label="Чат" className="flex w-[32px] items-center justify-center border-t border-l border-[#9c9a9b] bg-[#787677]">
            <svg viewBox="0 0 24 24" className="size-6"><circle cx="12" cy="12" r="12" fill="#6fbe44" /><path d="M7 4h10q3 0 3 4v3q0 3-3 3h-2l-2 4-2-4H7q-3 0-3-3V8q0-4 3-4z" fill="#d9eaf7" stroke="#8eb8d8" /></svg>
          </button>
        </div>
      </div>
    </footer>
  );
}

function Scrollbar() {
  return (
    <div aria-hidden="true" className="flex w-5 shrink-0 flex-col items-center border-l border-[#ddd] bg-[#efefef]">
      <Down size="h-[5px] w-[8px]" className="mt-2 mb-[9px] rotate-180 text-[#444]" />
      <span className="flex h-[269px] w-[17px] flex-col items-center justify-center gap-[2px] rounded-sm border border-[#9b9b9b] bg-gradient-to-r from-[#f4f4f4] to-[#cfcfcf]">
        <i className="h-px w-2 bg-[#666]" /><i className="h-px w-2 bg-[#666]" /><i className="h-px w-2 bg-[#666]" /><i className="h-px w-2 bg-[#666]" />
      </span>
      <Down size="h-[5px] w-[8px]" className="mt-auto mb-2 text-[#444]" />
    </div>
  );
}

/* ---------- taskbar ---------- */

function AppIcon({ name }) {
  const s = "size-[38px]";
  switch (name) {
    case "Проводник":
      return <svg viewBox="0 0 40 38" className="h-[38px] w-10"><path d="M2 4h8l2 3h25v27H2z" fill="#e3c765" /><path d="M5 2h9v5H5zM16 5h9v4h-9zM26 7h10v4H26z" fill="#fff" stroke="#8a8a6a" strokeWidth="0.500" /><path d="M1 9h38v26H1z" fill="#f6e28c" stroke="#cdb055" /><path d="M5 36V25q0-2 2-2h26q2 0 2 2v11h-7v-6H13v6z" fill="#9fd4ee" stroke="#4f9fc6" /></svg>;
    case "Удалённый рабочий стол":
      return <svg viewBox="0 0 38 38" className={s}><path d="M4 1l29 3-3 24-27-4z" fill="#d8dde2" /><path d="M6 3l25 3-3 19-24-4z" fill="#1322b8" /><path d="M6 3l13 2-6 17-9-1z" fill="#2d46e0" /><path d="M12 28l10 1 2 5q-8 4-15 1z" fill="#dfe3e6" /><circle cx="28" cy="29" r="9" fill="#f0f0f0" stroke="#aaa" /><path d="M23 26l5 4-5 4M34 24l-5 3 5 4" fill="none" stroke="#3a9c2c" strokeWidth="2.500" /></svg>;
    case "Проигрыватель":
      return <svg viewBox="0 0 38 38" className={s}><path d="M28 6l5 1v27l-5 1z" fill="#8fc4dd" stroke="#5b9fc2" /><rect x="4" y="6" width="25" height="29" fill="#a7d7ee" stroke="#5fa9cc" /><circle cx="16" cy="20" r="11" fill="#f07522" stroke="#fff" /><path d="M12 13l11 7-11 7z" fill="#fff" /></svg>;
    case "Блокнот":
      return <svg viewBox="0 0 38 38" className={s}><path d="M14 2l20 1 2 30-9 3z" fill="#f2efe2" stroke="#a9a080" /><path d="M13 2l20 1-8 31L2 29z" fill="#79bec4" /><path d="M13 5l18 1-3 9-19-2z" fill="#b6e0e4" /><path d="M12 3h22" stroke="#666" strokeWidth="3" strokeDasharray="1.500 1.500" /></svg>;
    case "Internet Explorer":
      return <svg viewBox="0 0 40 40" className={s}><path d="M37 23H14a8 8 0 0 0 15 4h7a16 16 0 1 1 1-4zM14 17h15a8 8 0 0 0-15 0z" fill="#5ec8f2" stroke="#2487bd" /><path d="M3 38Q-4 26 14 9 32-4 38 3q2 4-2 10 1-9-7-7Q16 10 8 25q-5 8-5 13z" fill="#f7c926" stroke="#c79612" strokeWidth="0.500" /></svg>;
    case "Word":
      return <svg viewBox="0 0 38 38" className={s}><path d="M6 1h30v36H2V6z" fill="#e8eef9" stroke="#7d98cc" /><path d="M23 3h12v22H23z" fill="#9db7e3" /><path d="M18 22l19 8-3 7H16z" fill="#fff" stroke="#b5c3dd" /><text x="2" y="26" fontFamily="Liberation Sans" fontWeight="bold" fontSize="27" fill="#1e4ea3" stroke="#1e4ea3">W</text></svg>;
    case "Firefox":
      return <svg viewBox="0 0 38 38" className={s}><circle cx="19" cy="20" r="17" fill="#ff7a18" /><circle cx="20" cy="18" r="11" fill="#1b4fb5" /><path d="M4 8q5 0 8 2 4-3 8-2-4 3-2 6l4 2q-1 4-6 4 3 6 9 3 2 4-5 6-10 0-12-11z" fill="#ff9a1a" /><path d="M2 20Q1 36 18 37q14 0 17-13-6 9-17 7Q6 29 5 12z" fill="#f0384f" /><path d="M23 0q9 6 9 15-2 14-9 16 14 0 13-16Q34 5 23 0z" fill="#ffdc2e" /></svg>;
    case "Chrome":
      return <svg viewBox="0 0 38 38" className={s}><circle cx="19" cy="19" r="18" fill="#ffce44" /><path d="M3.400 10A18 18 0 0 1 34.600 10H19a9 9 0 0 0-8 13z" fill="#dd4b3e" /><path d="M3.400 10A18 18 0 0 0 19 37l8-14a9 9 0 0 1-16 0z" fill="#1ca261" /><circle cx="19" cy="19" r="8.500" fill="#fff" /><circle cx="19" cy="19" r="6.800" fill="#4c8bf5" /></svg>;
    case "Навигатор":
      return <svg viewBox="0 0 38 38" className={s}><rect x="1" y="1" width="36" height="36" rx="4" fill="#1d66c8" stroke="#d4e6fa" strokeWidth="1.500" /><path d="M19 4l14 30-14-9-14 9z" fill="#f2f5f8" /><path d="M19 14l4 12-4 2-4-2z" fill="#1d66c8" /><path d="M19 4v10l4 12 10 8z" fill="#c2cad4" /></svg>;
    case "Skype":
      return <svg viewBox="0 0 38 38" className={s}><circle cx="12" cy="12" r="11" fill="#0aa5e2" /><circle cx="26" cy="26" r="11" fill="#0aa5e2" /><circle cx="19" cy="19" r="16" fill="#0aa5e2" /><text x="19" y="29" textAnchor="middle" fontFamily="Open Sans" fontWeight="800" fontSize="28" fill="#fff">S</text></svg>;
    case "alpari":
      return <svg viewBox="0 0 40 42" className="h-[42px] w-10"><g fill="none" strokeWidth="1.500"><path d="M1 12l6-5 3 2 7-8 3 3 3-1 7 7 3-2 6 5" stroke="#d8432f" /><path d="M1 16l6-4 4 1 6-8 4 3 3-1 6 7 4-1 5 4" stroke="#e58a35" /><path d="M1 20l6-4 4 1 6-8 4 3 3-1 6 7 4-1 5 4" stroke="#c3c23c" /><path d="M1 24l6-4 4 1 6-8 4 3 3-1 6 7 4-1 5 4" stroke="#69a83c" /></g><text x="20" y="37" textAnchor="middle" fontFamily="Open Sans" fontWeight="600" fontSize="13" fill="#111">alpari</text></svg>;
    default:
      return <svg viewBox="0 0 38 34" className="h-[34px] w-[38px]"><g fill="none" stroke="#33618c" strokeWidth="3"><path d="M2 9V2h8M28 2h8v7M2 25v7h8M28 32h8v-7" /></g><rect x="3" y="4" width="32" height="25" fill="#fff" /><rect x="5" y="6" width="28" height="21" fill="#5fa9e6" /><path d="M8 13q5-5 10-1 6-5 12 1v3H8z" fill="#d5e9f8" /><path d="M5 14l11 3 17 1v4H5z" fill="#3d7f45" /><path d="M5 21h28v6H5z" fill="#3b6f9c" /></svg>;
  }
}

const pinned = [
  ["Проводник", true], ["Удалённый рабочий стол", false], ["Проигрыватель", true], ["Блокнот", false], ["Internet Explorer", false], ["Word", true],
  ["Firefox", false], ["Chrome", true], ["Навигатор", true, true], ["Skype", true], ["alpari", true], ["Просмотр", true],
];

function Taskbar() {
  return (
    <div className="flex h-[47px] shrink-0 items-stretch border-t border-[#0c2740] bg-[linear-gradient(90deg,#12527f_0%,#2f96cf_7%,#4aa9db_22%,#3c98d0_40%,#2a86c9_50%,#2173bd_65%,#1e68b6_74%,#184c86_76%,#123a68_100%)] text-white shadow-[inset_0_1px_0_rgba(255,255,255,0.45)]">
      <button aria-label="Пуск" className="w-[72px] pl-[11px]">
        <svg viewBox="0 0 44 44" className="size-11"><circle cx="22" cy="22" r="21" fill="#1b5578" stroke="#a5cbe2" strokeWidth="1.500" /><ellipse cx="22" cy="34" rx="15" ry="9" fill="#25b5e8" opacity="0.700" /><ellipse cx="22" cy="12" rx="17" ry="10" fill="#d3dee6" opacity="0.500" /><path d="M12 13q5-4 9 0l-2 8q-5-3-9 0z" fill="#f0562c" /><path d="M23 14q5 3 10 0l-3 8q-4 3-9 0z" fill="#9ccb3b" /><path d="M9 23q5-3 9 0l-2 8q-4-3-9 0z" fill="#56aee4" /><path d="M20 24q5 3 10 0l-3 8q-4 3-9 0z" fill="#fbc12e" /></svg>
      </button>
      <div className="flex items-stretch gap-1">
        {pinned.map(([name, open, active]) => (
          <button
            key={name}
            aria-label={name}
            className={
              "flex w-[66px] items-center justify-center rounded-[3px] pb-[2px] " +
              (active ? "border border-[#eaf6ff] bg-gradient-to-br from-[#cfe8f8] via-[#9fd0ee] to-[#e6f4fc]" : open ? "border border-[#d3ecfa]/80 bg-gradient-to-b from-white/45 to-white/15 shadow-[0_0_0_1px_rgba(10,50,80,0.5)]" : "")
            }
          >
            <AppIcon name={name} />
          </button>
        ))}
      </div>
      <svg viewBox="0 0 200 46" preserveAspectRatio="none" className="mr-6 ml-auto h-[46px] w-[200px]" aria-hidden="true">
        <path d="M44 0Q95 15 124 46h26Q115 12 74 0z" fill="#b9dcff" opacity="0.850" className="blur-[3px]" />
      </svg>
      <div className="flex w-[460px] items-center pb-1">
        <span className="ml-[27px] w-[26px] font-['Liberation_Sans'] text-[13px]">EN</span>
        <button aria-label="Скрытые значки" className="mx-[15px]"><Down size="h-[5px] w-[9px]" className="rotate-180" /></button>
        <div className="flex flex-1 items-center justify-between pt-[3px] pl-[3px]">
          <svg viewBox="0 0 20 20" className="size-5"><circle cx="10" cy="10" r="10" fill="#2ca4dc" /><path d="M3 10l13-6-3 12-4-3-2 2v-4l6-5-7 5z" fill="#fff" /></svg>
          <span className="bg-[#8a0a0a] px-px text-[14px] leading-5">En</span>
          <svg viewBox="0 0 20 20" className="size-5"><path d="M9 0h2l7 3v3l-7-2v6H9z" fill="#0e8f3a" /><path d="M1 9q6-3 18 0v11H1z" fill="#1fc04c" /><path d="M6 13l3 3 5-5" stroke="#fff" strokeWidth="2.500" fill="none" /></svg>
          <svg viewBox="0 0 20 20" className="size-5"><path d="M0 12l9-7 6 2-9 8z" fill="#8e9499" stroke="#444" /><circle cx="14" cy="14" r="5" fill="#3da53a" stroke="#fff" /><path d="M12 14l2 2 3-4" stroke="#fff" fill="none" /></svg>
          <svg viewBox="0 0 20 20" className="size-5"><path d="M2 1v19" stroke="#fff" strokeWidth="2" /><path d="M4 2q3-2 6 1l2 3q4 1 8-1-2 4-4 7-4 1-7-2-2-2-5 0z" fill="#fff" /></svg>
          <svg viewBox="0 0 20 20" className="size-5"><rect x="5" y="5" width="14" height="10" fill="#1c4a80" stroke="#fff" strokeWidth="2" /><path d="M8 19h9M12 15v4M3 8v11" stroke="#fff" strokeWidth="2" /><rect x="1" y="1" width="4" height="7" fill="#ddd" /></svg>
          <svg viewBox="0 0 20 20" className="size-5"><path d="M1 7h3l5-6v18l-5-6H1z" fill="#fff" /><path d="M12 7q2 3 0 6M15 5q4 5 0 10" fill="none" stroke="#fff" strokeWidth="1.500" /></svg>
          <svg viewBox="0 0 20 20" className="size-5"><path d="M4 7q1-6 7-5 4 0 5 4l-5 3zM1 15q-2-6 5-6l5-1q6-3 8 2l-7 6z" fill="#f4f4f4" stroke="#555" strokeWidth="0.500" /><circle cx="14" cy="13" r="5" fill="#7c7c7c" /><path d="M11 13h6" stroke="#fff" strokeWidth="2" /></svg>
        </div>
        <time className="mr-[12px] ml-[20px] pt-1 text-center text-[13px] leading-[22px]">18:44<br />11.03.2018</time>
        <button aria-label="Показать рабочий стол" className="-mb-1 h-[45px] w-7 border border-[#6f92b5] bg-gradient-to-b from-white/35 via-black/20 to-transparent" />
      </div>
    </div>
  );
}

export default function App() {
  return (
    <div className="flex h-screen flex-col overflow-hidden bg-white font-['Noto_Sans','Open_Sans',sans-serif]">
      <TabBar />
      <Toolbar />
      <div className="flex min-h-0 flex-1">
        <div className="relative min-w-0 flex-1 overflow-hidden">
          <Header />
          <div className="bg-[linear-gradient(180deg,#d9d9d9_0,#f2f2f2_14px,#ffffff_34px)]">
            <div className="mx-auto flex w-full max-w-[1370px] gap-[22px] pr-[6px]">
              <Main />
              <Sidebar />
            </div>
          </div>
          <Ticker />
        </div>
        <Scrollbar />
      </div>
      <Taskbar />
    </div>
  );
}
